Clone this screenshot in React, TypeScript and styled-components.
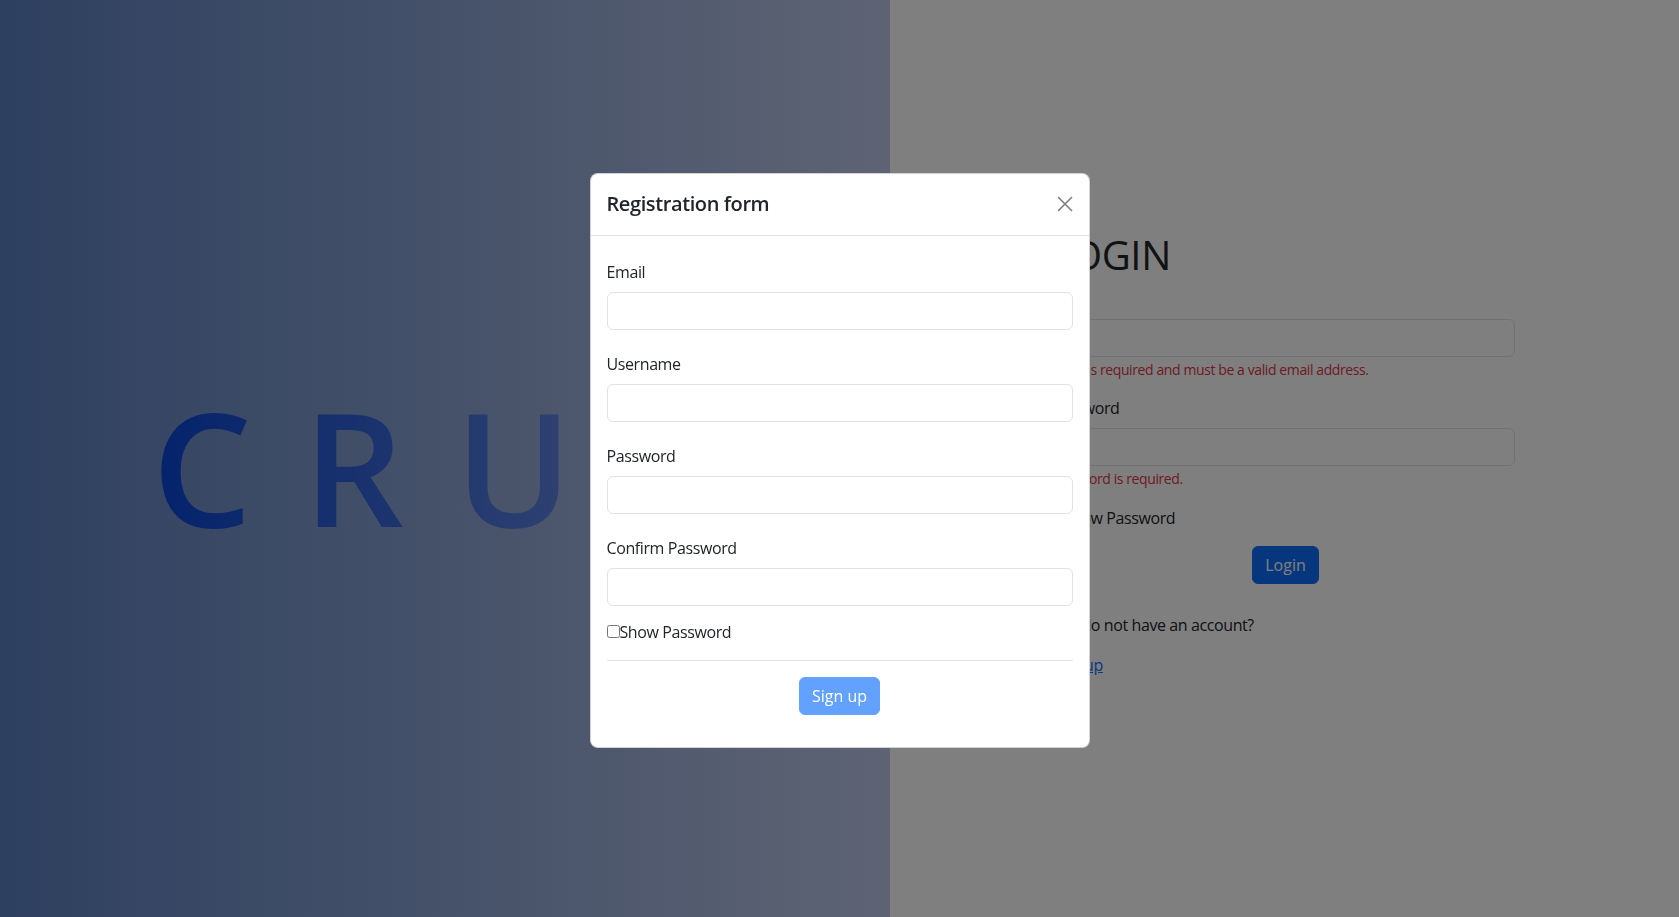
import React from 'react';
import styled, { createGlobalStyle } from 'styled-components';

const GlobalStyle = createGlobalStyle`
  html, body {
    margin: 0;
    padding: 0;
  }

  body {
    font-family: 'Open Sans', 'Noto Sans', sans-serif;
    font-size: 16px;
    line-height: 1.5;
    letter-spacing: -0.025em;
    color: #212529;
    overflow: hidden;
  }

  *, *::before, *::after {
    box-sizing: border-box;
  }
`;

const Page = styled.div`
  display: grid;
  grid-template-columns: 890px 1fr;
  height: 100vh;
`;

const BrandPanel = styled.section`
  display: flex;
  align-items: center;
  justify-content: center;
  padding-top: 15px;
  background: linear-gradient(90deg, #5c80c0 0%, #bcc8e8 100%);
`;

const BrandTitle = styled.h1`
  margin: 0 0 0 52px;
  font-size: 158px;
  font-weight: 600;
  line-height: 1;
  letter-spacing: 51px;
  background: linear-gradient(90deg, #0846d8 0%, #8aa2e6 100%);
  -webkit-background-clip: text;
  background-clip: text;
  color: transparent;
`;

const LoginPanel = styled.section`
  display: flex;
  justify-content: center;
  padding-top: 231px;
  background: #fff;
`;

const LoginForm = styled.form`
  width: 464px;
  margin-left: -4px;
`;

const Heading = styled.h2`
  margin: 0 0 8px;
  font-size: 40px;
  font-weight: 500;
  line-height: 1.2;
`;

const Field = styled.div<{ $spacing?: number }>`
  margin-bottom: ${({ $spacing }) => $spacing ?? 16}px;
`;

const Label = styled.label`
  display: block;
  margin-bottom: 8px;
  font-size: 16px;
  line-height: 24px;
`;

const Input = styled.input`
  display: block;
  width: 100%;
  height: 38px;
  padding: 6px 12px;
  font: inherit;
  color: #212529;
  background: #fff;
  border: 1px solid #dee2e6;
  border-radius: 6px;
  outline: none;
`;

const Feedback = styled.div`
  margin-top: 2px;
  font-size: 14px;
  line-height: 21px;
  color: #dc3545;
`;

const CheckRow = styled.label<{ $offset?: number }>`
  display: flex;
  align-items: center;
  margin-top: ${({ $offset }) => $offset ?? 0}px;
  font-size: 16px;
  line-height: 24px;

  input {
    width: 13px;
    height: 13px;
    margin: 0;
  }
`;

const Center = styled.div<{ $gap?: number; $bottom?: number; $shift?: number }>`
  display: flex;
  justify-content: center;
  margin-top: ${({ $gap }) => $gap ?? 16}px;
  margin-bottom: ${({ $bottom }) => $bottom ?? 0}px;
  padding-left: ${({ $shift }) => $shift ?? 0}px;
`;

const Button = styled.button<{ $disabled?: boolean }>`
  padding: 6px 12px;
  font: inherit;
  line-height: 24px;
  color: #fff;
  background: ${({ $disabled }) => ($disabled ? '#62a1fe' : '#0d6efd')};
  border: 1px solid ${({ $disabled }) => ($disabled ? '#62a1fe' : '#0d6efd')};
  border-radius: 6px;
  cursor: pointer;
`;

const Text = styled.p`
  margin: 29px 0 16px;
`;

const TextLink = styled.a`
  color: #0d6efd;
  text-decoration: underline;
`;

const Backdrop = styled.div`
  position: fixed;
  inset: 0;
  display: flex;
  align-items: center;
  justify-content: center;
  background: rgba(0, 0, 0, 0.5);
`;

const Modal = styled.div`
  width: 500px;
  margin-top: 3px;
  background: #fff;
  border: 1px solid rgba(0, 0, 0, 0.175);
  border-radius: 8px;
`;

const ModalHeader = styled.div`
  display: flex;
  align-items: center;
  justify-content: space-between;
  padding: 15px 16px 16px;
  border-bottom: 1px solid #dee2e6;
`;

const ModalTitle = styled.h5`
  margin: 0;
  font-size: 20px;
  font-weight: 600;
  line-height: 30px;
`;

const CloseButton = styled.button`
  display: flex;
  align-items: center;
  justify-content: center;
  width: 24px;
  height: 24px;
  padding: 0;
  margin-right: -4px;
  background: none;
  border: 0;
  cursor: pointer;
  color: #000;
  opacity: 0.5;
`;

const ModalBody = styled.div`
  padding: 24px 16px 16px;
`;

const Divider = styled.hr`
  margin: 16px 0;
  border: 0;
  border-top: 1px solid #dee2e6;
`;

const CloseIcon = () => (
  <svg width="16" height="16" viewBox="0 0 16 16" fill="none">
    <path d="M1 1L15 15M15 1L1 15" stroke="currentColor" strokeWidth="1.6" />
  </svg>
);

const registerFields = ['Email', 'Username', 'Password', 'Confirm Password'];

export default function App() {
  return (
    <>
      <GlobalStyle />
      <Page>
        <BrandPanel>
          <BrandTitle>CRUD</BrandTitle>
        </BrandPanel>

        <LoginPanel>
          <LoginForm>
            <Heading>LOGIN</Heading>
            <Field>
              <Label>Email</Label>
              <Input type="email" />
              <Feedback>Email is required and must be a valid email address.</Feedback>
            </Field>
            <Field $spacing={17}>
              <Label>Password</Label>
              <Input type="password" />
              <Feedback>Password is required.</Feedback>
            </Field>
            <CheckRow>
              <input type="checkbox" />
              Show Password
            </CheckRow>
            <Center $shift={6}>
              <Button type="button">Login</Button>
            </Center>
            <Text>You do not have an account?</Text>
            <TextLink href="#">Sign up</TextLink>
          </LoginForm>
        </LoginPanel>
      </Page>

      <Backdrop>
        <Modal>
          <ModalHeader>
            <ModalTitle>Registration form</ModalTitle>
            <CloseButton type="button" aria-label="Close">
              <CloseIcon />
            </CloseButton>
          </ModalHeader>
          <ModalBody>
            {registerFields.map((name) => (
              <Field key={name} $spacing={22}>
                <Label>{name}</Label>
                <Input type={name.includes('Password') ? 'password' : 'text'} />
              </Field>
            ))}
            <CheckRow $offset={-8}>
              <input type="checkbox" />
              Show Password
            </CheckRow>
            <Divider />
            <Center $gap={0} $bottom={16}>
              <Button type="button" $disabled>
                Sign up
              </Button>
            </Center>
          </ModalBody>
        </Modal>
      </Backdrop>
    </>
  );
}
